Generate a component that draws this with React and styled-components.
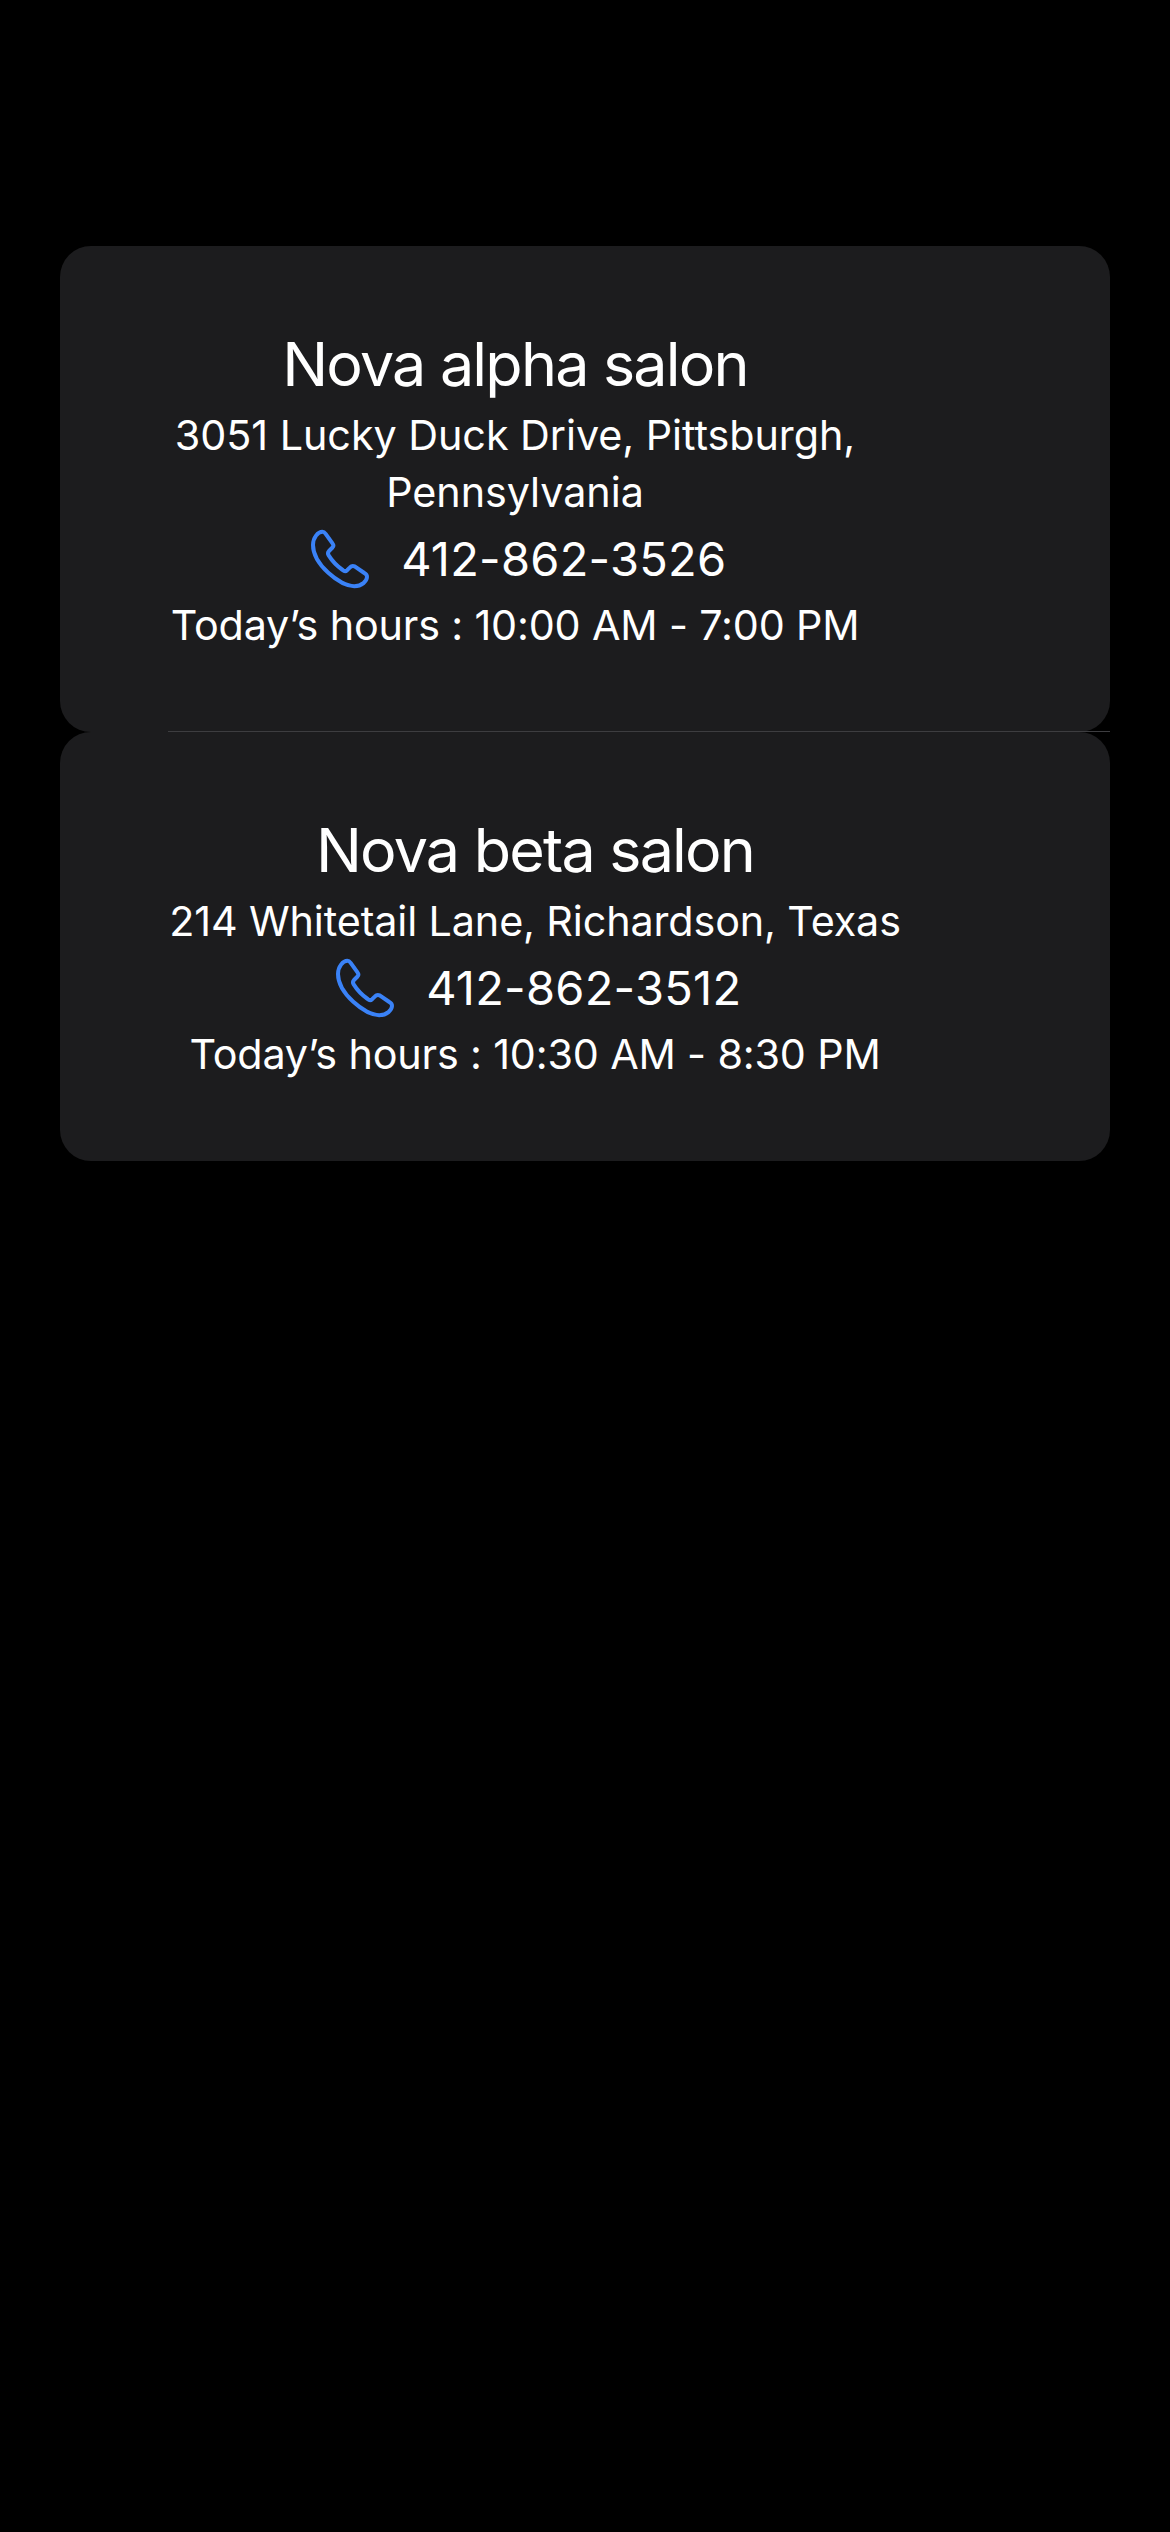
import React from "react";
import styled, { createGlobalStyle } from "styled-components";

const GlobalStyle = createGlobalStyle`
  * { box-sizing: border-box; }
  body {
    margin: 0;
    background: #000;
  }
`;

const Screen = styled.main`
  min-height: 2532px;
  padding: 246px 60px 0;
  background: #000;
  color: #fff;
  font-family: Inter, "Liberation Sans", sans-serif;
`;

const List = styled.ul`
  display: flex;
  flex-direction: column;
  margin: 0;
  padding: 0;
  list-style: none;
`;

const Card = styled.li`
  position: relative;
  padding: 86px 0 78.5px 108px;
  border-radius: 31px;
  background: #1c1c1e;

  &:not(:last-child)::after {
    content: "";
    position: absolute;
    right: 0;
    bottom: 0;
    left: 108px;
    height: 1px;
    background: #3d3d40;
  }
`;

const Details = styled.div`
  display: flex;
  flex-direction: column;
  align-items: center;
  width: ${({ $width }) => $width}px;
  text-align: center;
`;

const Name = styled.h2`
  margin: 0 0 9.5px;
  font-size: 61px;
  font-weight: 400;
  line-height: 65px;
  letter-spacing: -1.8px;
`;

const Line = styled.p`
  margin: 0;
  font-size: 41.3px;
  line-height: 57px;
  letter-spacing: ${({ $tracking }) => $tracking}px;
`;

const PhoneRow = styled.div`
  display: flex;
  align-items: center;
  gap: 31.5px;
  height: 76px;
  padding-left: 6px;
`;

const PhoneNumber = styled.span`
  font-size: 47px;
  line-height: 57px;
  letter-spacing: 0.25px;
`;

const Handset = styled.svg`
  display: block;
  width: 60px;
  height: 60px;
  fill: none;
  stroke: #3a82f7;
  stroke-width: 12;
  stroke-linejoin: round;
`;

const PhoneIcon = () => (
  <Handset viewBox="60 54 180 180" aria-hidden="true">
    <path d="M97 62.5C101 62.5 104 64.500 107 68.500L128 98Q132.500 104 127.500 109.500L117 120Q111.500 126 116 133C126 149 141 165 158 177Q165 183.500 171.500 177.500L180 169Q186 162.500 194 166L223 186Q231.500 191 231 198C230.500 210 216 225.500 193 225.500C150 225.500 69 160 69 102C69 80 84 62.500 97 62.500Z" />
  </Handset>
);

const salons = [
  {
    name: "Nova alpha salon",
    address: "3051 Lucky Duck Drive, Pittsburgh, Pennsylvania",
    phone: "412-862-3526",
    hours: "10:00 AM - 7:00 PM",
    width: 694,
    tracking: -0.05,
  },
  {
    name: "Nova beta salon",
    address: "214 Whitetail Lane, Richardson, Texas",
    phone: "412-862-3512",
    hours: "10:30 AM - 8:30 PM",
    width: 734,
    tracking: -0.12,
  },
];

export default function App() {
  return (
    <>
      <GlobalStyle />
      <Screen>
        <List>
          {salons.map((salon) => (
            <Card key={salon.name}>
              <Details $width={salon.width}>
                <Name>{salon.name}</Name>
                <Line $tracking={salon.tracking}>{salon.address}</Line>
                <PhoneRow>
                  <PhoneIcon />
                  <PhoneNumber>{salon.phone}</PhoneNumber>
                </PhoneRow>
                <Line $tracking={-0.16}>{`Today’s hours : ${salon.hours}`}</Line>
              </Details>
            </Card>
          ))}
        </List>
      </Screen>
    </>
  );
}
